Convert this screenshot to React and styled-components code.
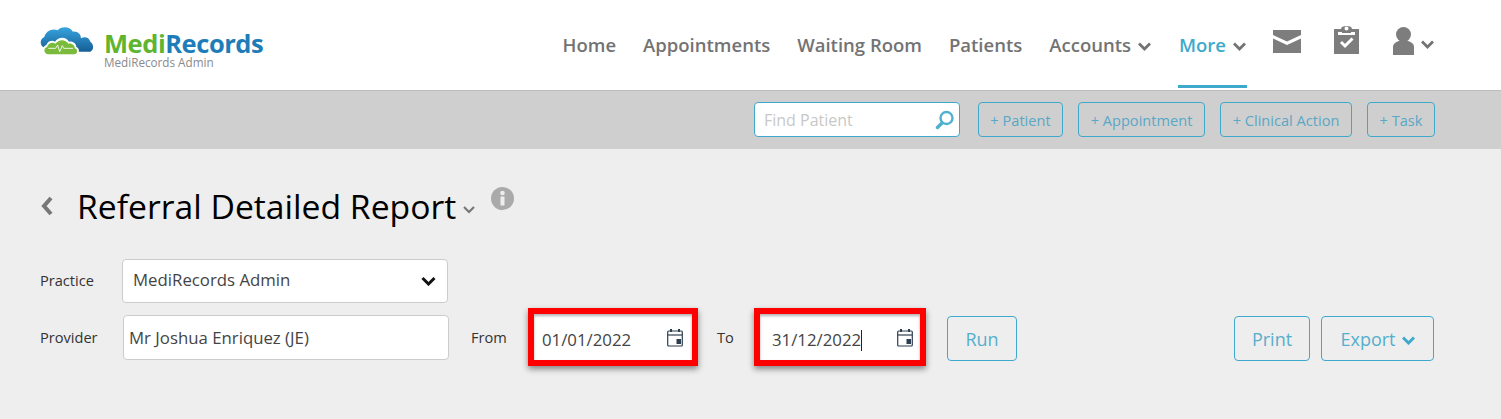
import React from "react";
import styled, { createGlobalStyle } from "styled-components";

const Global = createGlobalStyle`
  html, body { margin: 0; padding: 0; background: #eeeeee; }
  body { font-family: "Open Sans", "Liberation Sans", sans-serif; overflow: hidden; }
`;
const Page = styled.div`width: 1501px; height: 419px; background: #eee; overflow: hidden;`;
const Header = styled.header`
  height: 90px; background: #fff; border-bottom: 1px solid #bdbdbd;
  display: flex; justify-content: space-between; padding: 0 67px 0 40px;
`;
const Logo = styled.div`display: flex; align-items: flex-start; padding-top: 26px; width: 240px;`;
const Cloud = styled.svg`flex: none; width: 54px; height: 28px; margin: 1px 10px 0 0;`;
const LogoText = styled.div`display: flex; flex-direction: column; padding-top: 4px;`;
const Brand = styled.div`
  font-size: 25.5px; line-height: 26px; font-weight: 700; letter-spacing: -0.45px; color: #1e7db8; white-space: nowrap;
  span { color: #5fb52f; }
`;
const Sub = styled.div`font-size: 11.7px; line-height: 12px; color: #8a8a8a;`;
const Nav = styled.nav`display: flex; align-items: flex-start;`;
const NavItem = styled.a`
  height: 88px; box-sizing: border-box; padding: 31px ${p => p.$active ? 1 : 0}px 0; margin-left: ${p => p.$gap}px;
  font-size: 18.5px; line-height: 28px; font-weight: 600;
  color: ${p => p.$active ? "#3fa9cc" : "#737373"};
  border-bottom: ${p => p.$active ? "3px solid #3fa9cc" : "0"};
  display: flex; gap: 7px; align-items: flex-start;
`;
const NavChevron = styled.svg`width: 13px; height: 9px; margin-top: ${p => p.$top || 11}px; margin-left: ${p => p.$ml || 0}px; fill: none; stroke: #737373; stroke-width: 2.8;`;
const NavIcon = styled.svg`fill: #7d7d7d; margin-left: ${p => p.$gap}px; margin-top: ${p => p.$top}px;`;
const Toolbar = styled.div`
  height: 58px; background: #cfcfcf; box-sizing: border-box; padding: 11px 66px 0 754px;
  display: flex; align-items: flex-start;
`;
const Search = styled.div`
  width: 206px; height: 35px; box-sizing: border-box; background: #fff; border: 1px solid #3fa9cc; border-radius: 4px;
  display: flex; align-items: center; justify-content: space-between; padding: 0 4px 0 9px;
  color: #c8c8c8; font-size: 16px;
`;
const ToolButton = styled.button`
  height: 35px; box-sizing: border-box; margin-left: ${p => p.$gap}px; width: ${p => p.$w}px; padding: 0; background: transparent;
  border: 1px solid #3fa9cc; border-radius: 4px; color: #5aa7c6; font: 400 14.6px "Open Sans", sans-serif; white-space: nowrap;
`;
const Content = styled.main`padding: 0 66px 0 40px;`;
const TitleRow = styled.div`display: flex; align-items: flex-start; height: 110px;`;
const Back = styled.svg`width: 14px; height: 20px; margin-top: 47px; fill: none; stroke: #777; stroke-width: 4; margin-right: 23px;`;
const Title = styled.h1`margin: 32px 0 0; font-size: 33.7px; line-height: 50px; font-weight: 400; color: #000; white-space: nowrap;`;
const TitleChevron = styled.svg`width: 12px; height: 8px; margin: 57px 0 0 7px; fill: none; stroke: #777; stroke-width: 2.2;`;
const Info = styled.svg`width: 23px; height: 23px; margin: 38px 0 0 16px;`;
const FormRow = styled.div`display: flex; align-items: flex-start; height: ${p => p.$h}px;`;
const Label = styled.label`
  width: ${p => p.$w}px; font-size: 14.6px; line-height: 20px; color: #333; padding-top: ${p => p.$top}px; margin-left: ${p => p.$ml || 0}px; flex: none;
`;
const Select = styled.div`
  width: 326px; height: 44px; box-sizing: border-box; background: #fff; border: 1px solid #ccc; border-radius: 4px;
  display: flex; align-items: center; justify-content: space-between; padding: 0 11px 3px 10px; font-size: 16.8px; color: #444;
`;
const TextInput = styled.div`
  width: 326px; height: 45px; box-sizing: border-box; background: #fff; border: 1px solid #ccc; border-radius: 4px; margin-left: 1px;
  display: flex; align-items: center; padding: 0 5px; font-size: 16.8px; color: #444; flex: none;
`;
const DateField = styled.div`
  width: ${p => p.$w}px; height: 58px; box-sizing: border-box; background: #fff; border: 6px solid #fe0000;
  box-shadow: 0 3px 6px rgba(0,0,0,.45), inset 0 2px 3px rgba(0,0,0,.3);
  display: flex; align-items: center; justify-content: space-between; padding: 4px ${p => p.$pr}px 0 ${p => p.$pl}px; font-size: 16.8px; color: #444; margin-top: -7px; flex: none;
`;
const Caret = styled.span`display: inline-block; width: 1px; height: 21px; background: #222; vertical-align: -5px;`;
const CalSvg = styled.svg`width: 16px; height: 19px; fill: none; stroke: #2c3e50; stroke-width: 1.2; margin-top: -3px;`;
const OutlineButton = styled.button`
  height: 45px; width: ${p => p.$w}px; box-sizing: border-box; background: transparent; border: 1px solid #3fa9cc; border-radius: 4px;
  color: #56aecd; font: 400 18px "Open Sans", sans-serif; margin: 1px 0 0 ${p => p.$ml}px; padding: 0; flex: none;
  display: flex; align-items: center; justify-content: center; gap: 6px;
`;
const BtnChevron = styled.svg`width: 13px; height: 9px; fill: none; stroke: #3fa9cc; stroke-width: 3; margin-top: 3px;`;
const SelectChevron = styled.svg`width: 15px; height: 10px; fill: none; stroke: #111; stroke-width: 3; margin-top: 3px;`;

const chevron = "M1 1.5 L6.5 7 L12 1.5";

const CalIcon = () => (
  <CalSvg viewBox="0 0 16 19">
    <rect x=".7" y="3" width="14.6" height="15" rx="1" />
    <path d="M.7 7H15.3" />
    <path d="M4 1V4M12 1V4" strokeWidth="2" />
    <rect x="9.5" y="11" width="4.5" height="5" fill="#2c3e50" stroke="none" />
  </CalSvg>
);

const CloudLogo = () => (
  <Cloud viewBox="0 0 160 84">
    <defs>
      <linearGradient id="b" x1="0" y1="0" x2="0" y2="1">
        <stop offset="0" stopColor="#38a4de" /><stop offset="1" stopColor="#155f96" />
      </linearGradient>
    </defs>
    <path fill="url(#b)" d="M12 62C-2 56 -3 36 12 30C16 12 36 2 52 10C62 -3 88 -3 98 14C112 12 122 22 122 34C132 28 146 30 150 44C160 50 162 68 150 74L110 74L104 56L40 52L12 62Z" />
    <path fill="#fff" d="M22 84C4 80 2 60 18 54C22 42 36 38 44 44C54 28 78 28 86 44C98 42 108 50 108 60C120 64 118 84 104 84Z" />
    <path fill="#7abb3b" d="M24 82C10 80 8 64 20 60C24 48 36 44 46 50C54 36 76 36 84 50C96 48 104 56 103 64C114 66 112 82 102 82Z" />
    <path fill="none" stroke="#fff" strokeWidth="2.6" d="M24 64H46L52 54L58 74L66 56L70 64H98" />
  </Cloud>
);

export default function App() {
  return (
    <Page>
      <Global />
      <Header>
        <Logo>
          <CloudLogo />
          <LogoText>
            <Brand><span>Medi</span>Records</Brand>
            <Sub>MediRecords Admin</Sub>
          </LogoText>
        </Logo>
        <Nav>
          <NavItem $gap={0}>Home</NavItem>
          <NavItem $gap={27}>Appointments</NavItem>
          <NavItem $gap={27}>Waiting Room</NavItem>
          <NavItem $gap={27}>Patients</NavItem>
          <NavItem $gap={27}>Accounts<NavChevron viewBox="0 0 13 9"><path d={chevron} /></NavChevron></NavItem>
          <NavItem $gap={27} $active>More<NavChevron viewBox="0 0 13 9"><path d={chevron} /></NavChevron></NavItem>
          <NavIcon $gap={26} $top={30} width="28" height="23" viewBox="0 0 28 23">
            <path d="M0 0H28V5L14 11.5L0 5Z" /><path d="M0 8.5L14 15L28 8.5V23H0Z" />
          </NavIcon>
          <NavIcon $gap={33} $top={26} width="25" height="28" viewBox="0 0 25 28">
            <path fillRule="evenodd" d="M0 3H7C7 1 9 0 12.5 0S18 1 18 3H25V28H0ZM4 6V9H21V6H17V7H8V6ZM10.5 2.5A2 2 0 0 0 14.5 2.5A2 2 0 0 0 10.5 2.5Z" />
            <path fill="none" stroke="#fff" strokeWidth="3" d="M7 16L11 20L18.5 12.5" />
          </NavIcon>
          <NavIcon $gap={34} $top={27} width="21" height="28" viewBox="0 0 21 28">
            <circle cx="10.5" cy="7.5" r="7.5" /><path d="M0 28V20C0 16 4 14.5 7 13.5H14C17 14.5 21 16 21 20V28Z" />
          </NavIcon>
          <NavChevron viewBox="0 0 13 9" $top={40} $ml={7}><path d={chevron} /></NavChevron>
        </Nav>
      </Header>
      <Toolbar>
        <Search>
          Find Patient
          <svg width="20" height="20" viewBox="0 0 20 20" fill="none" stroke="#4fb0d0">
            <circle cx="11.5" cy="8" r="6" strokeWidth="2.4" />
            <path d="M7 13L2.5 17.5" strokeWidth="3.4" strokeLinecap="round" />
          </svg>
        </Search>
        <ToolButton $gap={18} $w={85}>+ Patient</ToolButton>
        <ToolButton $gap={15} $w={127}>+ Appointment</ToolButton>
        <ToolButton $gap={15} $w={132}>+ Clinical Action</ToolButton>
        <ToolButton $gap={15} $w={68}>+ Task</ToolButton>
      </Toolbar>
      <Content>
        <TitleRow>
          <Back viewBox="0 0 14 20"><path d="M11 2L4 10L11 18" /></Back>
          <Title>Referral Detailed Report</Title>
          <TitleChevron viewBox="0 0 12 8"><path d="M1 1L6 6L11 1" /></TitleChevron>
          <Info viewBox="0 0 23 23">
            <circle cx="11.5" cy="11.5" r="11.5" fill="#aaa" />
            <rect x="9.5" y="9.5" width="4" height="9" fill="#eee" />
            <circle cx="11.5" cy="6" r="2.3" fill="#eee" />
          </Info>
        </TitleRow>
        <FormRow $h={56}>
          <Label $w={82} $top={11}>Practice</Label>
          <Select>
            MediRecords Admin
            <SelectChevron viewBox="0 0 15 10"><path d="M1.5 2L7.5 8L13.5 2" /></SelectChevron>
          </Select>
        </FormRow>
        <FormRow $h={60}>
          <Label $w={82} $top={12}>Provider</Label>
          <TextInput>Mr Joshua Enriquez (JE)</TextInput>
          <Label $w={57} $ml={22} $top={12}>From</Label>
          <DateField $w={170} $pl={8} $pr={9}>
            01/01/2022
            <CalIcon />
          </DateField>
          <Label $w={37} $ml={19} $top={12}>To</Label>
          <DateField $w={172} $pl={12} $pr={7}>
            <span>31/12/2022<Caret /></span>
            <CalIcon />
          </DateField>
          <OutlineButton $w={70} $ml={21}>Run</OutlineButton>
          <OutlineButton $w={76} $ml={217}>Print</OutlineButton>
          <OutlineButton $w={113} $ml={11}>Export<BtnChevron viewBox="0 0 13 9"><path d={chevron} /></BtnChevron></OutlineButton>
        </FormRow>
      </Content>
    </Page>
  );
}
